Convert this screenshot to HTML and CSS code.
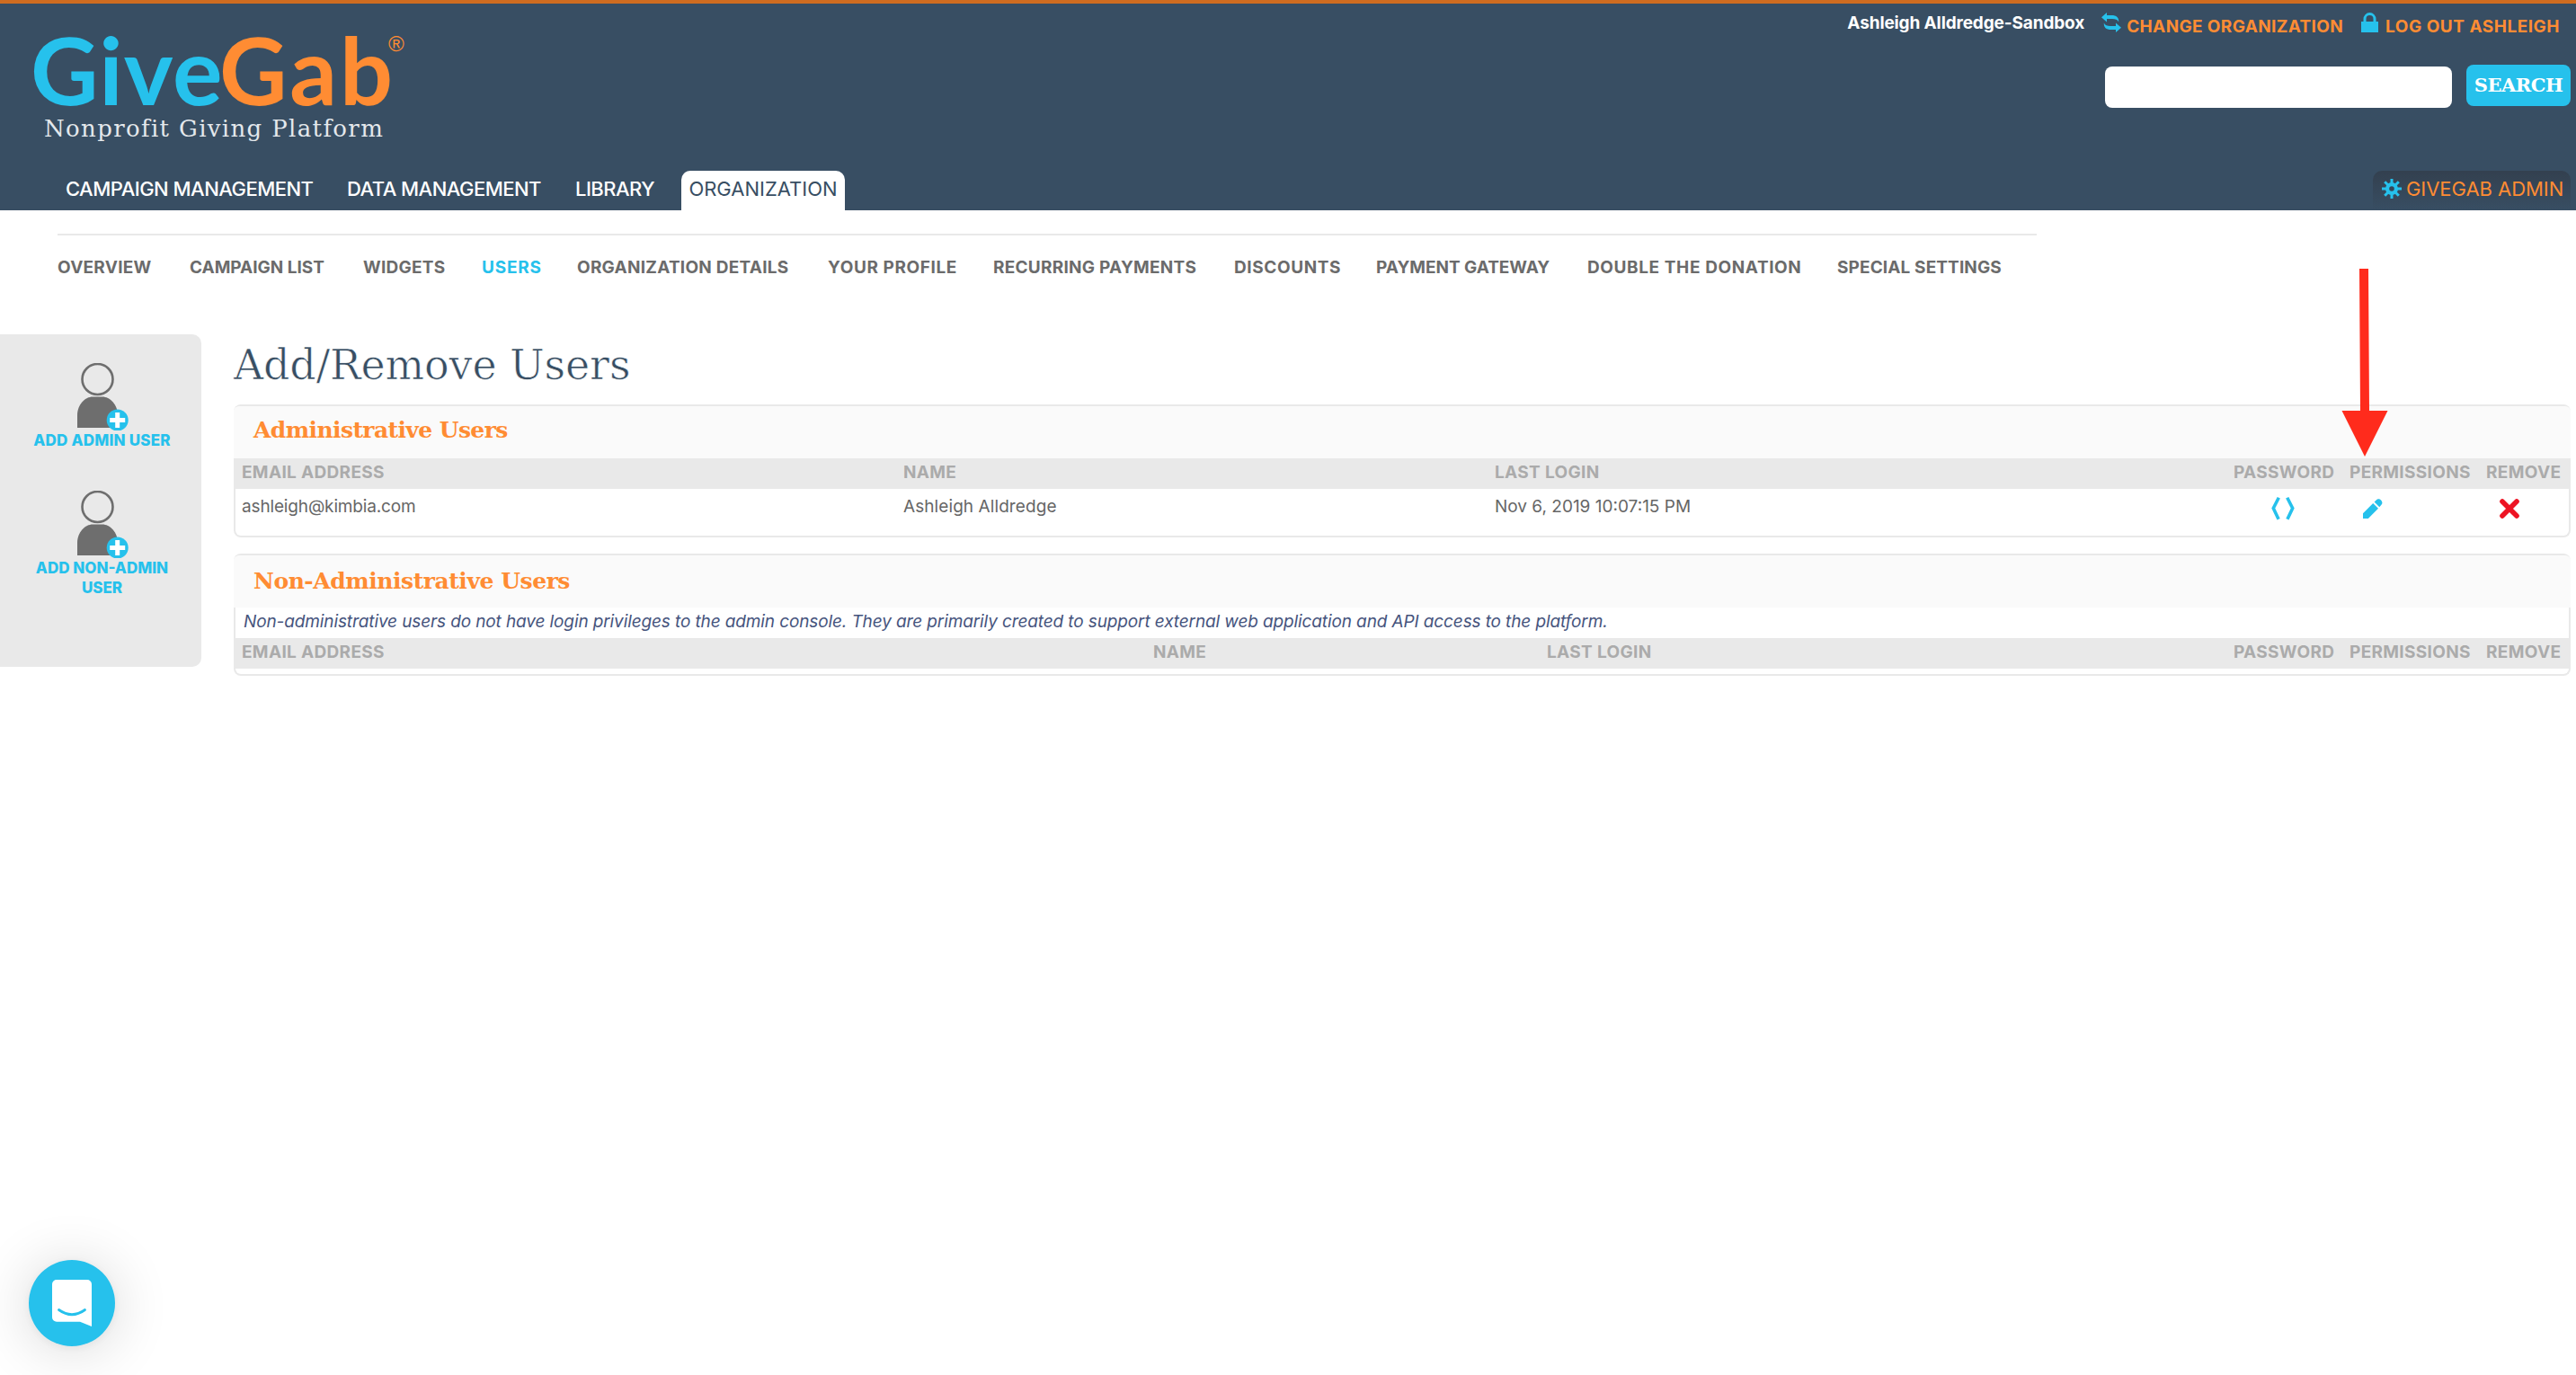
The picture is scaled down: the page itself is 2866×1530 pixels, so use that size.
FILE: index.html
```
<!DOCTYPE html>
<html lang="en">
<head>
<meta charset="utf-8">
<title>Add/Remove Users</title>
<link rel="stylesheet" href="styles.css">
</head>
<body>
<header class="header">
  <div class="header-top">
    <div class="logo">
      <div class="brand"><span class="give">Give</span><span class="gab">Gab</span><span class="reg">®</span></div>
      <div class="tagline">Nonprofit Giving Platform</div>
    </div>
    <div class="tools">
      <div class="account">
        <span class="org-name">Ashleigh Alldredge-Sandbox</span>
        <a class="account-link change">
          <svg width="22" height="22" viewBox="0 0 22 22"><path fill="#26c1ec" d="M0 5.300 6 0v3h5c6 0 8.500 2.500 8.200 7.500C18 7.800 15.500 7 12 7H6v3.500zM22 16.700 16 22v-3h-5c-6 0-8.500-2.500-8.200-7.500C4 14.200 6.500 15 10 15h6v-3.500z"/></svg>
          <span>CHANGE ORGANIZATION</span>
        </a>
        <a class="account-link logout">
          <svg width="19" height="22" viewBox="0 0 19 22"><path fill="#26c1ec" d="M0 10h19v12H0z"/><path fill="none" stroke="#26c1ec" stroke-width="3" d="M4 11V7.200a5.500 5.700 0 0 1 11 0V11"/></svg>
          <span>LOG OUT ASHLEIGH</span>
        </a>
      </div>
      <form class="search">
        <input class="search-input" type="text">
        <button class="search-button" type="button">SEARCH</button>
      </form>
    </div>
  </div>
  <div class="header-bar">
    <nav class="main-nav">
      <a>CAMPAIGN MANAGEMENT</a><a>DATA MANAGEMENT</a><a>LIBRARY</a><a class="tab-active">ORGANIZATION</a>
    </nav>
    <a class="admin-link">
      <svg width="22" height="22" viewBox="0 0 22 22"><g stroke="#26c1ec" stroke-width="3"><path d="M11 0v5M11 17v5M0 11h5M17 11h5M3.200 3.200l4 4M14.800 14.800l4 4M3.200 18.800l4-4M14.800 7.200l4-4"/></g><circle cx="11" cy="11" r="4.900" fill="none" stroke="#26c1ec" stroke-width="4.200"/></svg>
      <span>GIVEGAB ADMIN</span>
    </a>
  </div>
</header>
<nav class="sub-nav">
  <a>OVERVIEW</a><a class="snug">CAMPAIGN LIST</a><a>WIDGETS</a><a class="current">USERS</a><a>ORGANIZATION DETAILS</a><a class="roomy">YOUR PROFILE</a><a>RECURRING PAYMENTS</a><a class="roomy">DISCOUNTS</a><a class="snug">PAYMENT GATEWAY</a><a class="roomy">DOUBLE THE DONATION</a><a class="last">SPECIAL SETTINGS</a>
</nav>
<main class="main">
  <aside class="sidebar">
    <a class="side-action">
      <svg width="58" height="75" viewBox="0 0 58 75"><circle cx="22.500" cy="18" r="17" fill="none" stroke="#6e6e6e" stroke-width="2.600"/><path fill="#6e6e6e" d="M0 72V58c0-12 9-20.500 17-20.500h11c8 0 17 8.500 17 20.500v14z"/><circle cx="44.700" cy="63.500" r="12" fill="#26c1ec"/><path stroke="#fff" stroke-width="5" d="M44.700 55v17M36.200 63.500h17"/></svg>
      <span>ADD ADMIN USER</span>
    </a>
    <a class="side-action">
      <svg width="58" height="75" viewBox="0 0 58 75"><circle cx="22.500" cy="18" r="17" fill="none" stroke="#6e6e6e" stroke-width="2.600"/><path fill="#6e6e6e" d="M0 72V58c0-12 9-20.500 17-20.500h11c8 0 17 8.500 17 20.500v14z"/><circle cx="44.700" cy="63.500" r="12" fill="#26c1ec"/><path stroke="#fff" stroke-width="5" d="M44.700 55v17M36.200 63.500h17"/></svg>
      <span class="side-tight">ADD NON-ADMIN<br>USER</span>
    </a>
  </aside>
  <div class="content">
    <h1 class="page-title">Add/Remove Users</h1>
    <section class="panel">
      <h2 class="panel-title">Administrative Users</h2>
      <div class="panel-body">
        <div class="row row-head cols-admin"><span>EMAIL ADDRESS</span><span>NAME</span><span>LAST LOGIN</span><span>PASSWORD</span><span>PERMISSIONS</span><span>REMOVE</span></div>
        <div class="row row-data cols-admin">
          <span class="email">ashleigh@kimbia.com</span><span>Ashleigh Alldredge</span><span class="login">Nov 6, 2019 10:07:15 PM</span>
          <span class="icon-cell icon-password"><svg width="26" height="26" viewBox="0 0 26 26"><path fill="none" stroke="#26c1ec" stroke-width="3.600" d="M8.300.8 2.300 12.500l5.800 12.200M17.700.8l6 11.700-5.800 12.200"/></svg></span>
          <span class="icon-cell"><svg width="22" height="22" viewBox="0 0 22 22"><path fill="#26c1ec" d="M0 22v-5.800L11.200 5l5.800 5.800L5.800 22zM12.600 3.600 15 1.200c3-3 8.500 2.300 5.600 5.400l-2.300 2.600z"/></svg></span>
          <span class="icon-cell"><svg width="22" height="22" viewBox="0 0 22 22"><path fill="none" stroke="#ed1424" stroke-width="5.600" stroke-linecap="round" d="m3 3 16 16M19 3 3 19"/></svg></span>
        </div>
      </div>
    </section>
    <section class="panel">
      <h2 class="panel-title panel-title-low">Non-Administrative Users</h2>
      <div class="panel-body panel-empty">
        <p class="note">Non-administrative users do not have login privileges to the admin console. They are primarily created to support external web application and API access to the platform.</p>
        <div class="row row-head cols-nonadmin"><span>EMAIL ADDRESS</span><span>NAME</span><span>LAST LOGIN</span><span>PASSWORD</span><span>PERMISSIONS</span><span>REMOVE</span></div>
      </div>
    </section>
  </div>
</main>
<svg class="arrow" width="52" height="210" viewBox="0 0 52 210"><path fill="#ff2b1c" d="M20 0h10l1 158h20.500L26 209 .5 158H21z"/></svg>
<div class="chat">
  <svg width="44" height="53" viewBox="0 0 44 53"><path fill="#fff" d="M5 0h34a5 5 0 0 1 5 5v47l-13-5.300H5a5 5 0 0 1-5-5V5a5 5 0 0 1 5-5z"/><path fill="none" stroke="#26c1ec" stroke-width="2.800" stroke-linecap="round" d="M7.500 33.500q14.500 10.400 29 0"/></svg>
</div>
</body>
</html>
```
FILE: styles.css
```
* { box-sizing: border-box; }
body {
  margin: 0;
  background: #fff;
  color: #666;
  font: 400 19px/24px Inter, sans-serif;
}
svg { display: block; flex: none; }

.header {
  height: 234px;
  border-top: 4px solid #cf6c20;
  background: #384e63;
}
.header-top {
  display: flex;
  justify-content: space-between;
  height: 186px;
}
.logo { padding: 33px 0 0 34px; }
.brand {
  display: flex;
  font: 700 104px/80px Lato, sans-serif;
}
.give { width: 210px; color: #26c1ec; letter-spacing: 1px; }
.gab { width: 188px; color: #ff8c33; letter-spacing: 2.900px; }
.reg { color: #ff8c33; font: 400 24px/24px "Liberation Sans", sans-serif; }
.tagline {
  margin: 8px 0 0 15px;
  color: #e4e8ec;
  font: 400 26px/36px "DejaVu Serif", serif;
  letter-spacing: 1.350px;
}
.tools { display: flex; flex-direction: column; align-items: flex-end; }
.account {
  display: flex;
  height: 68px;
  padding: 9px 18px 0 0;
  font-weight: 700;
}
.org-name { margin: 1px 19px 0 0; color: #fff; letter-spacing: -.130px; }
.account-link {
  display: flex;
  gap: 6px;
  padding-top: 1px;
  color: #ff8c33;
}
.account-link span { padding-top: 4px; }
.change { margin-right: 20px; letter-spacing: .350px; }
.logout { gap: 8px; letter-spacing: .500px; }
.search { display: flex; gap: 16px; padding-right: 6px; }
.search-input {
  width: 386px;
  height: 46px;
  margin-top: 2px;
  border: 0;
  border-radius: 8px;
  background: #fff;
}
.search-button {
  width: 116px;
  height: 46px;
  padding: 0;
  border: 0;
  border-radius: 8px;
  background: #26c1ec;
  color: #fff;
  font: 700 21px/44px "DejaVu Serif", serif;
  letter-spacing: -.500px;
}

.header-bar {
  display: flex;
  justify-content: space-between;
  height: 44px;
  padding: 0 6px 0 73px;
  font-size: 22px;
  line-height: 40px;
}
.main-nav {
  display: grid;
  grid-template-columns: 313px 254px 118px 182px;
  color: #fff;
  font-weight: 500;
  letter-spacing: -.530px;
}
.tab-active {
  border-radius: 10px 10px 0 0;
  background: #fff;
  color: #384e63;
  font-weight: 400;
  letter-spacing: 0;
  text-align: center;
}
.admin-link {
  display: flex;
  align-items: center;
  gap: 5px;
  width: 220px;
  padding: 0 0 4px 10px;
  border-radius: 10px 10px 0 0;
  background: linear-gradient(#33404f, #384e63);
  color: #ff8c33;
  letter-spacing: -.050px;
}

.sub-nav {
  display: grid;
  grid-template-columns: 147px 193px 132px 106px 279px 184px 268px 158px 235px 278px 1fr;
  width: 2202px;
  margin: 26px 0 0 64px;
  padding: 24px 0 62px;
  border-top: 2px solid #e9e9e9;
  color: #6b6b6b;
  font-weight: 700;
  letter-spacing: .250px;
  white-space: nowrap;
}
.current { color: #26c1ec; letter-spacing: .800px; }
.roomy { letter-spacing: .600px; }
.snug { letter-spacing: -.020px; }
.last { letter-spacing: .120px; }

.main { display: flex; gap: 36px; padding-right: 6px; }
.sidebar {
  flex: none;
  width: 224px;
  height: 370px;
  padding-top: 32px;
  border-radius: 0 10px 10px 0;
  background: #e9e9e9;
}
.side-action {
  display: flex;
  flex-direction: column;
  align-items: center;
  height: 142px;
  padding-left: 3px;
  color: #26c1ec;
  font-size: 17px;
  font-weight: 800;
  line-height: 22px;
  letter-spacing: .200px;
  text-align: center;
}
.side-action svg { margin-left: 3px; }
.side-tight { letter-spacing: 0; }

.content { flex: 1; }
.page-title {
  margin: 1px 0 11px;
  color: #384e63;
  font: 400 46px/66px "DejaVu Serif", serif;
  letter-spacing: -.150px;
  -webkit-text-stroke: .700px #fff;
}
.panel {
  margin-bottom: 18px;
  border-top: 2px solid #e9e9e9;
  border-radius: 8px;
}
.panel-title {
  height: 58px;
  margin: 0;
  padding-left: 22px;
  border-radius: 6px 6px 0 0;
  background: #fafafa;
  color: #ff8c33;
  font: 700 25px/54px "DejaVu Serif", serif;
  letter-spacing: -.600px;
}
.panel-title-low { line-height: 57px; letter-spacing: -.450px; }
.panel-body {
  border: 2px solid #e9e9e9;
  border-top: 0;
  border-radius: 0 0 8px 8px;
}
.panel-empty { padding-bottom: 6px; }
.row { display: grid; padding-left: 7px; }
.cols-admin { grid-template-columns: 736px 658px 822px 129px 152px 1fr; }
.cols-nonadmin { grid-template-columns: 1014px 438px 764px 129px 152px 1fr; }
.row-head {
  height: 34px;
  background: #e9e9e9;
  color: #ababab;
  font-weight: 700;
  line-height: 32px;
  letter-spacing: .330px;
}
.row-data { height: 52px; line-height: 40px; letter-spacing: .080px; }
.email { letter-spacing: -.150px; }
.login { letter-spacing: 0; }
.icon-cell { padding: 11px 0 0 15px; }
.icon-password { padding: 9px 0 0 42px; }
.note {
  height: 34px;
  margin: 0;
  padding-left: 9px;
  color: #46547d;
  font-style: italic;
  line-height: 32px;
  letter-spacing: -.115px;
}

.arrow { position: absolute; left: 2605px; top: 299px; }
.chat {
  position: fixed;
  left: 32px;
  bottom: 32px;
  display: flex;
  align-items: center;
  justify-content: center;
  width: 96px;
  height: 96px;
  border-radius: 50%;
  background: #26c1ec;
  box-shadow: 0 2px 12px rgba(0, 0, 0, .06), 0 4px 64px rgba(0, 0, 0, .16);
}
```
